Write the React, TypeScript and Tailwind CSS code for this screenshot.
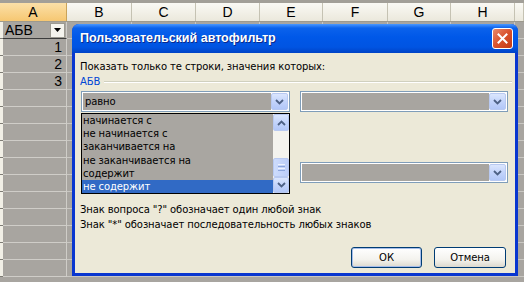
import * as React from 'react';

const headers = [
  { label: 'A', cls: 'w-[67px] bg-[linear-gradient(180deg,#fbe0a8_0%,#f6c772_100%)] border-[#c9a35a]' },
  { label: 'B', cls: 'w-[65px]' },
  { label: 'C', cls: 'w-[64px]' },
  { label: 'D', cls: 'w-[64px]' },
  { label: 'E', cls: 'w-[63px]' },
  { label: 'F', cls: 'w-[65px]' },
  { label: 'G', cls: 'w-[63px]' },
  { label: 'H', cls: 'w-[64px]' },
  { label: '', cls: 'flex-1' },
];

const bodyCols = ['w-[65px]', 'w-[64px]', 'w-[64px]', 'w-[63px]', 'w-[65px]', 'w-[63px]', 'w-[64px]'];

const cells = ['', '1', '2', '3', '', '', '', '', '', '', '', '', '', '', ''];

const options = [
  'начинается с',
  'не начинается с',
  'заканчивается на',
  'не заканчивается на',
  'содержит',
  'не содержит',
];

const Chevron = ({ up = false }: { up?: boolean }) => (
  <svg width="9" height="6" viewBox="0 0 9 6" className={up ? 'rotate-180' : ''}>
    <polyline points="1,1 4.5,4.5 8,1" fill="none" stroke="#4d6185" strokeWidth="1.8" />
  </svg>
);

const XpButton = ({ up = false, className = '' }: { up?: boolean; className?: string }) => (
  <div
    className={`flex items-center justify-center rounded-[2px] border border-[#b8c9f1] bg-[linear-gradient(180deg,#dbe6fd_0%,#c3d4fb_50%,#b2c7f8_100%)] ${className}`}
  >
    <Chevron up={up} />
  </div>
);

const Combo = ({ value, className = '' }: { value?: string; className?: string }) => (
  <div className={`flex h-[21px] border border-[#7f9db9] bg-white p-[1px] ${className}`}>
    <div className="flex flex-1 items-center bg-[#a8a5a0] pl-[2px] text-black">{value}</div>
    <XpButton className="w-[17px]" />
  </div>
);

const XpPush = ({ label, primary = false }: { label: string; primary?: boolean }) => (
  <div
    className={`flex h-[21px] items-center justify-center rounded-[3px] border bg-[linear-gradient(180deg,#ffffff_0%,#f4f3ee_60%,#dcd9ce_100%)] ${
      primary ? 'w-[71px] border-[#003c74] shadow-[inset_0_0_0_1px_#a6bde9]' : 'w-[72px] border-[#003c74]'
    }`}
  >
    {label}
  </div>
);

export default function App() {
  return (
    <div className="relative h-[282px] w-[524px] overflow-hidden bg-[#a8a5a0] font-['Liberation_Sans',sans-serif]">
      <div className="h-[3px] bg-[#a29f98]" />
      <div className="flex h-[19px] border-b border-[#9d9a8e] bg-[linear-gradient(180deg,#faf9f4_0%,#ebe8dc_100%)] text-[14px] text-black">
        {headers.map((h, i) => (
          <div key={i} className={`flex items-center justify-center border-r border-[#c5c2b3] ${h.cls}`}>
            {h.label}
          </div>
        ))}
      </div>
      {cells.map((c, r) => (
        <div key={r} className="flex h-[17px] text-[14px] text-black">
          <div className="w-[3px] border-b border-[#7d7b74] bg-[#f1efe6]" />
          <div
            className={`flex w-[64px] items-center border-r border-[#cfcdc8] ${
              r === 0 ? 'border-b border-b-[#3c3c3c] pl-[2px]' : 'justify-end border-b border-[#c9c7c2] pr-[4px]'
            }`}
          >
            {r === 0 ? (
              <>
                <span className="flex-1">АБВ</span>
                <div className="mr-[1px] flex h-[15px] w-[15px] items-center justify-center border border-[#9c9a91] bg-[#f5f4ee]">
                  <svg width="7" height="4" viewBox="0 0 7 4">
                    <polygon points="0,0 7,0 3.5,4" fill="#000" />
                  </svg>
                </div>
              </>
            ) : (
              c
            )}
          </div>
          {bodyCols.map((w, i) => (
            <div key={i} className={`${w} border-r border-b border-[#c9c7c2]`} />
          ))}
          <div className="flex-1 border-b border-[#c9c7c2]" />
        </div>
      ))}

      <div className="absolute top-[24px] left-[72px] flex h-[252px] w-[446px] flex-col overflow-hidden rounded-t-[7px] bg-[#0836d0]">
        <div className="flex h-[29px] items-center bg-[linear-gradient(180deg,#4a98ff_0%,#0b62ec_14%,#0058e8_45%,#0054e2_80%,#0043c6_100%)] pr-[5px] pl-[8px]">
          <span className="flex-1 text-[12.5px] font-bold text-white [text-shadow:1px_1px_0_#0a2a8a]">
            Пользовательский автофильтр
          </span>
          <div className="flex h-[21px] w-[21px] items-center justify-center rounded-[3px] border border-white bg-[linear-gradient(135deg,#e9896b_0%,#d9512c_50%,#c23a16_100%)]">
            <svg width="11" height="11" viewBox="0 0 11 11">
              <path d="M1.5 1.5 L9.5 9.5 M9.5 1.5 L1.5 9.5" stroke="#fff" strokeWidth="2" strokeLinecap="square" />
            </svg>
          </div>
        </div>
        <div className="relative mx-[3px] mb-[3px] flex flex-1 flex-col bg-[#ece9d8] font-['DejaVu_Sans',sans-serif] text-[10px] tracking-[-0.1px] text-black">
          <div className="mt-[7px] ml-[5px] leading-[13px]">Показать только те строки, значения которых:</div>
          <div className="mt-[2px] flex items-center leading-[13px]">
            <span className="ml-[5px] text-[#0046d5]">АБВ</span>
            <div className="mr-[3px] ml-[4px] h-[2px] flex-1 border-t border-b border-t-[#d0d0bf] border-b-white" />
          </div>
          <div className="mt-[3px] flex gap-[10px] pr-[7px] pl-[6px]">
            <Combo value="равно" className="w-[209px]" />
            <Combo className="w-[208px]" />
          </div>
          <div className="mt-[50px] flex gap-[10px] pr-[7px] pl-[6px]">
            <Combo className="w-[209px]" />
            <Combo className="w-[208px]" />
          </div>
          <div className="mt-[19px] ml-[5px] leading-[15px]">Знак вопроса "?" обозначает один любой знак</div>
          <div className="ml-[5px] leading-[15px]">Знак "*" обозначает последовательность любых знаков</div>
          <div className="mt-[15px] flex justify-end gap-[12px] pr-[9px]">
            <XpPush label="ОК" primary />
            <XpPush label="Отмена" />
          </div>

          <div className="absolute top-[60px] left-[6px] flex h-[81px] w-[209px] border border-black bg-[#a9a6a1]">
            <div className="flex flex-1 flex-col">
              {options.map((o, i) => (
                <div
                  key={o}
                  className={`h-[13.2px] pl-[1px] leading-[13px] ${i === options.length - 1 ? 'bg-[#316ac5] text-white' : ''}`}
                >
                  {o}
                </div>
              ))}
            </div>
            <div className="flex w-[16px] flex-col bg-[#f4f3ee]">
              <XpButton up className="h-[17px]" />
              <div className="flex-1" />
              <div className="flex h-[19px] flex-col items-center justify-center gap-[1px] rounded-[2px] border border-[#b8c9f1] bg-[linear-gradient(90deg,#cddcfc_0%,#bccdf9_100%)]">
                <div className="h-[1px] w-[7px] bg-[#eef3fe]" />
                <div className="h-[1px] w-[7px] bg-[#8ca5dc]" />
                <div className="h-[1px] w-[7px] bg-[#eef3fe]" />
                <div className="h-[1px] w-[7px] bg-[#8ca5dc]" />
              </div>
              <XpButton className="h-[16px]" />
            </div>
          </div>
        </div>
      </div>
    </div>
  );
}
